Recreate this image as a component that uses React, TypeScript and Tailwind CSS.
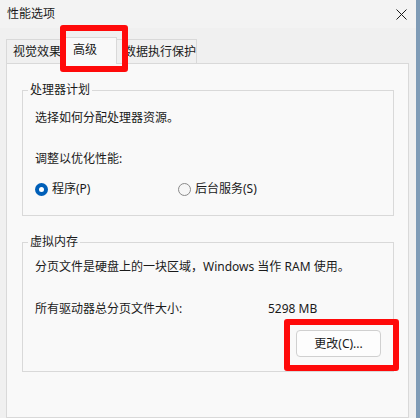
import React from 'react'

const font = { fontFamily: '"Segoe UI", "Noto Sans", "Noto Sans CJK SC", sans-serif' }

function Radio({ checked }: { checked?: boolean }) {
    return checked ? (
        <span className="w-[13px] h-[13px] rounded-full bg-[#005fb8] flex items-center justify-center">
            <span className="w-[5px] h-[5px] rounded-full bg-white" />
        </span>
    ) : (
        <span className="w-[13px] h-[13px] rounded-full border border-[#8a8a8a] bg-[#f6f6f6]" />
    )
}

function GroupBox({ label, className, children }: { label: string; className?: string; children: React.ReactNode }) {
    return (
        <div className={`relative border border-[#d9d9d9] ${className ?? ''}`}>
            <span className="absolute -top-[9px] left-[5px] px-[2px] bg-[#f9f9f9] leading-[16px] text-[12px] text-[#1a1a1a]">
                {label}
            </span>
            {children}
        </div>
    )
}

export default function App() {
    return (
        <div className="relative w-[420px] h-[418px] overflow-hidden flex text-[12px] text-[#1a1a1a]" style={font}>
            <div className="w-[416px] flex flex-col bg-[#f0f0f0]">
                {/* title bar */}
                <div className="h-[28px] bg-[#f3f3f3] flex items-center justify-between pl-[7px] pr-[9px]">
                    <span className="leading-[16px]">性能选项</span>
                    <svg width="11" height="11" viewBox="0 0 11 11">
                        <path d="M0.5 0.5 L10.5 10.5 M10.5 0.5 L0.5 10.5" stroke="#1a1a1a" strokeWidth="1" />
                    </svg>
                </div>

                {/* tabs */}
                <div className="flex items-end pl-[6px] pt-[9px] h-[35px] whitespace-nowrap">
                    <div className="h-[24px] w-[57px] border border-b-0 border-[#d9d9d9] bg-[#f0f0f0] pl-[6px] flex items-center">视觉效果</div>
                    <div className="h-[27px] w-[54px] border border-b-0 border-[#d9d9d9] bg-[#f9f9f9] pl-[9px] pb-[3px] flex items-center relative z-10 -mb-px">高级</div>
                    <div className="h-[24px] w-[80px] border border-b-0 border-l-0 border-[#d9d9d9] bg-[#f0f0f0] pl-[7px] flex items-center overflow-hidden">数据执行保护</div>
                </div>

                {/* tab panel */}
                <div className="ml-[6px] w-[403px] flex-1 border border-[#d9d9d9] bg-[#f9f9f9] pt-[26px] pl-[15px] pr-[14px]">
                    <GroupBox label="处理器计划" className="h-[126px] pt-[19px] pl-[12px]">
                        <div className="leading-[16px]">选择如何分配处理器资源。</div>
                        <div className="leading-[16px] mt-[25px]">调整以优化性能:</div>
                        <div className="flex mt-[14px] leading-[16px]">
                            <div className="w-[143px] flex items-center gap-[4px]">
                                <Radio checked />
                                <span>程序(P)</span>
                            </div>
                            <div className="flex items-center gap-[4px]">
                                <Radio />
                                <span>后台服务(S)</span>
                            </div>
                        </div>
                    </GroupBox>

                    <GroupBox label="虚拟内存" className="mt-[26px] h-[130px] pt-[16px] pl-[12px] pr-[12px]">
                        <div className="leading-[16px]">分页文件是硬盘上的一块区域，Windows 当作 RAM 使用。</div>
                        <div className="flex leading-[16px] mt-[26px]">
                            <span className="w-[233px]">所有驱动器总分页文件大小:</span>
                            <span>5298 MB</span>
                        </div>
                        <div className="flex justify-end mt-[13px]">
                            <button className="w-[85px] h-[27px] rounded-[4px] border border-[#d0d0d0] bg-[#fdfdfd] leading-[16px]">
                                更改(C)...
                            </button>
                        </div>
                    </GroupBox>
                </div>
            </div>
            <div className="w-[4px] bg-[#7e9bb6]" />

            {/* red annotation boxes */}
            <div className="absolute left-[60px] top-[25px] w-[68px] h-[47px] border-[6px] border-[#ff0a0a] rounded-[3px] z-20" />
            <div className="absolute left-[284px] top-[319px] w-[115px] h-[52px] border-[6px] border-[#ff0a0a] rounded-[3px] z-20" />
        </div>
    )
}
